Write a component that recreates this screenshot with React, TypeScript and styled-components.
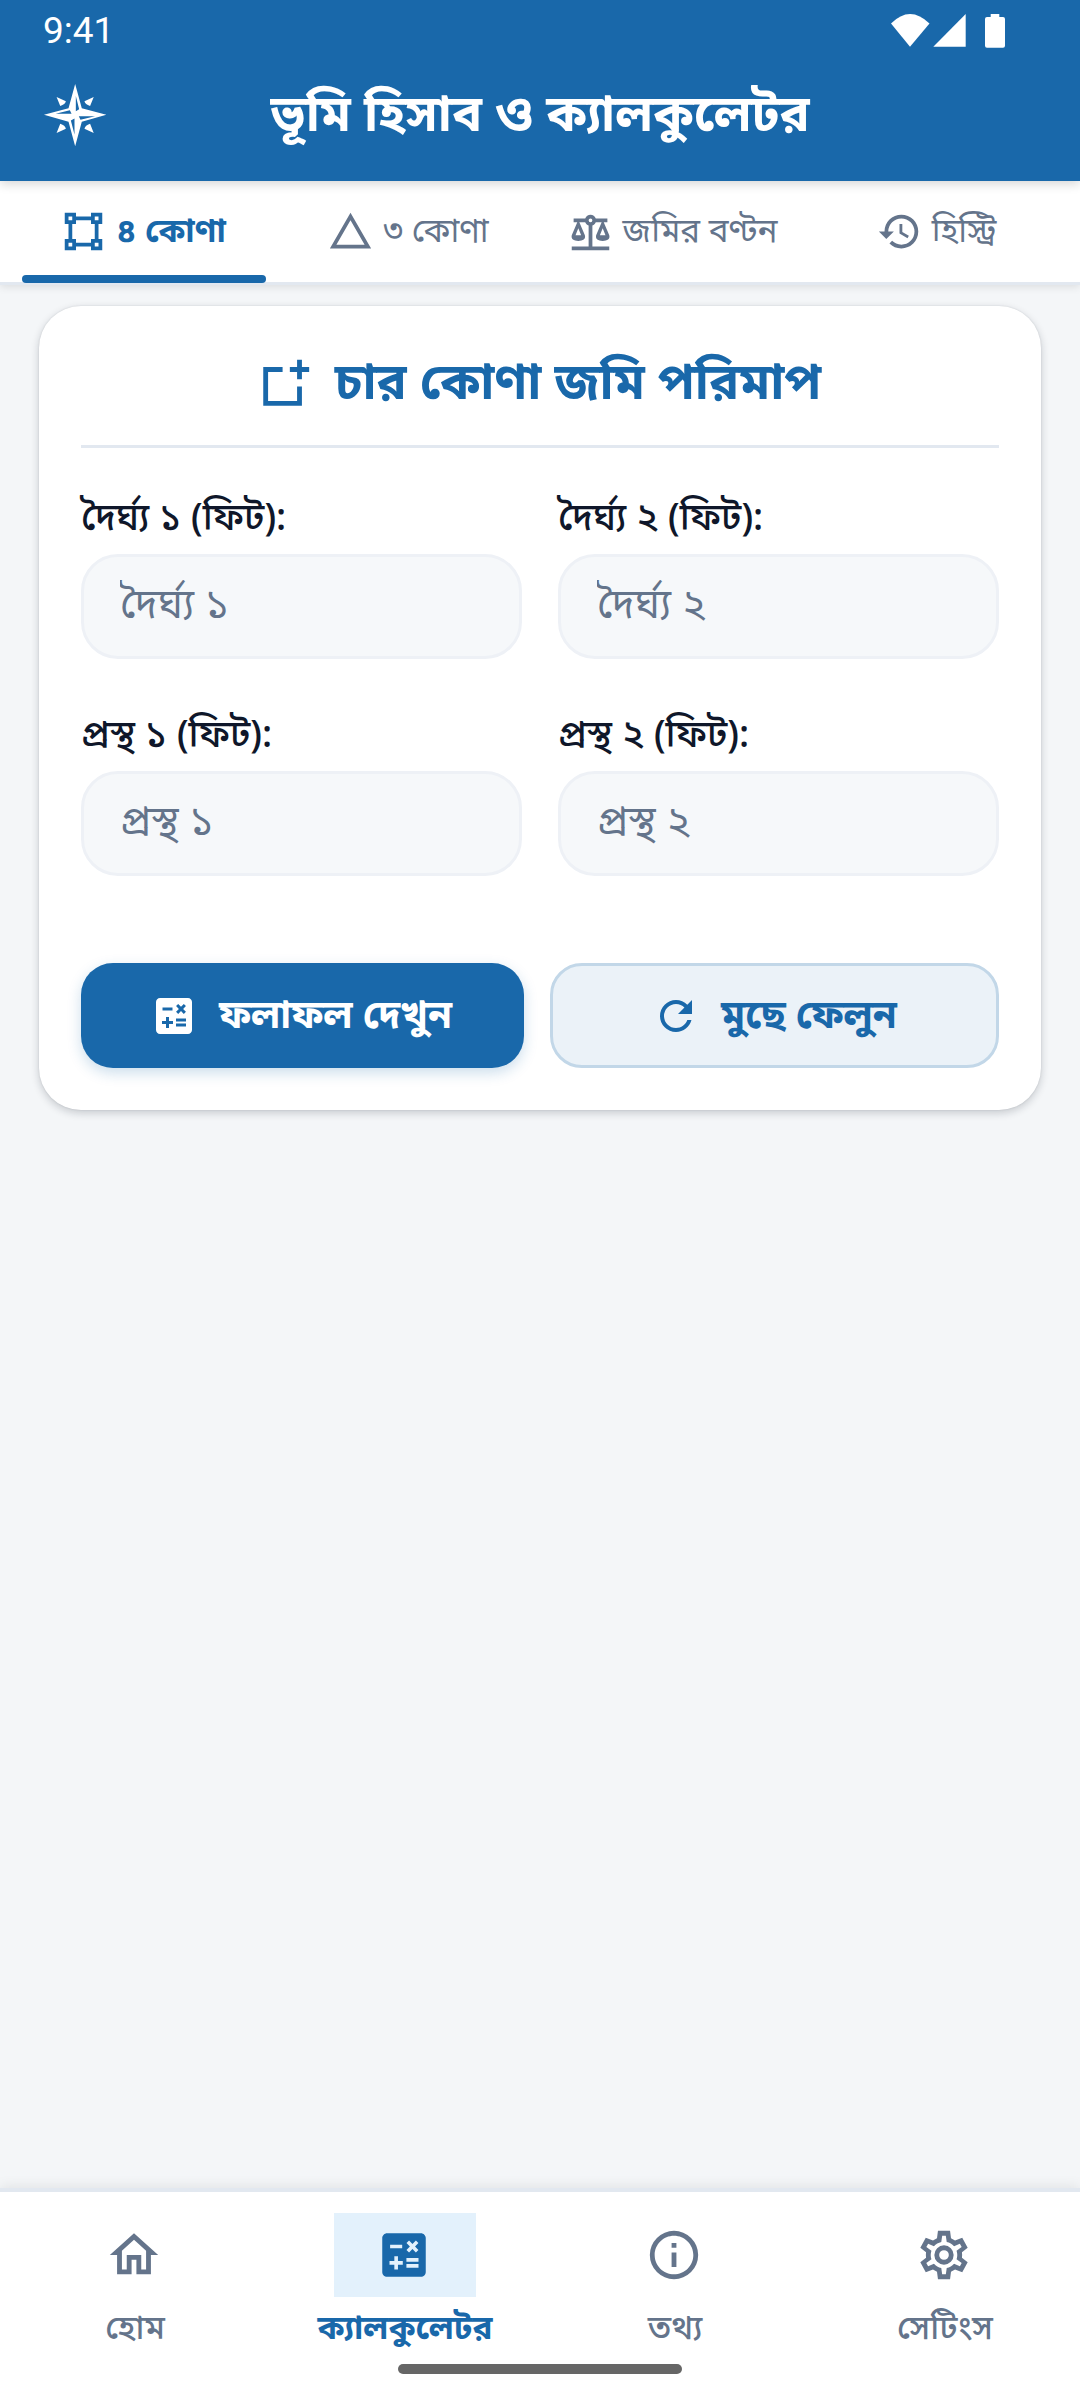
import React from 'react';
import styled, { createGlobalStyle, css } from 'styled-components';

const blue = '#1968aa';
const slate = '#64748b';

const Global = createGlobalStyle`
  * { box-sizing: border-box; }
  body { margin: 0; background: #f4f6f8; }
  button, input { font: inherit; }
`;

const Screen = styled.div`
  display: flex;
  flex-direction: column;
  width: 1080px;
  height: 2400px;
  overflow: hidden;
  background: #f4f6f8;
  font-family: 'Noto Sans Bengali', 'Noto Sans', sans-serif;
`;

const Header = styled.header`
  position: relative;
  z-index: 2;
  flex: none;
  height: 181px;
  background: ${blue};
  color: #fff;
  box-shadow: 0 3px 10px rgba(0, 0, 0, 0.16);
`;

const StatusBar = styled.div`
  display: flex;
  align-items: center;
  justify-content: space-between;
  height: 62px;
  padding: 0 74px 0 43px;
`;

const Clock = styled.span`
  font-family: Roboto, sans-serif;
  font-size: 37px;
  line-height: 62px;
`;

const StatusIcons = styled.svg`
  display: block;
  width: 116px;
  height: 36px;
  fill: #fff;
`;

const TitleBar = styled.div`
  display: grid;
  grid-template-columns: 64px 1fr 64px;
  align-items: center;
  height: 105px;
  padding: 0 43px;
`;

const Title = styled.h1`
  margin: 0;
  padding-top: 7px;
  text-align: center;
  font-size: 50px;
  font-weight: 700;
  line-height: 64px;
  white-space: nowrap;
`;

const Tabs = styled.nav`
  position: relative;
  z-index: 1;
  flex: none;
  display: grid;
  grid-template-columns: repeat(4, 244px);
  justify-content: center;
  column-gap: 20px;
  height: 104px;
  border-bottom: 3px solid #e2e8f0;
  background: #fff;
  box-shadow: 0 2px 8px rgba(0, 0, 0, 0.1);
`;

const Tab = styled.button<{ $active?: boolean }>`
  display: flex;
  align-items: center;
  justify-content: center;
  gap: 10px;
  padding: 8px 0 0 1px;
  border: 0;
  border-bottom: 8px solid transparent;
  background: none;
  color: ${slate};
  font-size: 33.2px;
  line-height: 48px;
  white-space: nowrap;
  ${(p) =>
    p.$active &&
    css`
      position: relative;
      padding: 8px 1px 0 0;
      color: ${blue};
      font-weight: 700;
      &::after {
        content: '';
        position: absolute;
        left: 0;
        right: 0;
        bottom: -9px;
        height: 8px;
        border-radius: 4px;
        background: ${blue};
      }
    `}
`;

const Caption = styled.span`
  padding-top: 5px;
`;

const Main = styled.main`
  flex: 1;
  padding: 21px 39px;
`;

const Card = styled.section`
  height: 804px;
  padding: 0 42px 42px;
  border-radius: 42px;
  background: #fff;
  box-shadow: 0 3px 8px rgba(15, 23, 42, 0.2), 0 0 2px rgba(15, 23, 42, 0.12);
  display: flex;
  flex-direction: column;
`;

const CardTitle = styled.h2`
  display: flex;
  align-items: center;
  justify-content: center;
  gap: 21px;
  height: 142px;
  margin: 0 0 43px;
  padding: 16px 3px 0 0;
  border-bottom: 3px solid #e2e8f0;
  color: ${blue};
  font-size: 50px;
  font-weight: 700;
  line-height: 64px;
  white-space: nowrap;
`;

const Fields = styled.div`
  display: grid;
  grid-template-columns: 1fr 1fr;
  gap: 49px 36px;
`;

const Field = styled.label`
  display: flex;
  flex-direction: column;
  gap: 7px;
  padding-top: 3px;
  color: #0f172a;
  font-size: 37.4px;
  font-weight: 550;
  line-height: 53px;
`;

const Input = styled.input`
  width: 100%;
  height: 105px;
  padding: 2px 36px 0;
  border: 3px solid #eef1f6;
  border-radius: 37px;
  outline: 0;
  background: #f6f8fa;
  font-size: 41px;
  font-weight: 450;
  &::placeholder {
    color: ${slate};
    opacity: 1;
  }
`;

const Actions = styled.div`
  display: grid;
  grid-template-columns: 443px 449px;
  column-gap: 26px;
  margin-top: auto;
`;

const Action = styled.button<{ $primary?: boolean }>`
  display: flex;
  align-items: center;
  justify-content: center;
  gap: 21px;
  height: 105px;
  padding: 0 ${(p) => (p.$primary ? 3 : 0)}px 0 0;
  border: ${(p) => (p.$primary ? '0' : '3px solid #c2d7e8')};
  border-radius: 32px;
  background: ${(p) => (p.$primary ? blue : '#ebf2f8')};
  color: ${(p) => (p.$primary ? '#fff' : blue)};
  box-shadow: ${(p) => (p.$primary ? '0 5px 14px rgba(25, 104, 170, 0.22)' : 'none')};
  font-size: 38.8px;
  font-weight: 700;
  line-height: 52px;
  white-space: nowrap;
`;

const BottomNav = styled.nav`
  position: relative;
  flex: none;
  display: grid;
  grid-template-columns: repeat(4, 1fr);
  height: 212px;
  border-top: 4px solid #e2e8f0;
  background: #fff;
  box-shadow: 0 -2px 12px rgba(0, 0, 0, 0.08);
`;

const NavItem = styled.a<{ $active?: boolean }>`
  display: flex;
  flex-direction: column;
  align-items: center;
  padding-top: 21px;
  color: ${(p) => (p.$active ? blue : slate)};
  font-size: 33.2px;
  font-weight: ${(p) => (p.$active ? 700 : 500)};
  line-height: 48px;
  white-space: nowrap;
`;

const NavIcon = styled.span<{ $active?: boolean }>`
  display: flex;
  align-items: center;
  justify-content: center;
  width: 142px;
  height: 84px;
  margin-bottom: 5px;
  padding-right: 2px;
  background: ${(p) => (p.$active ? '#e3f1fc' : 'transparent')};
`;

const HomeBar = styled.span`
  position: absolute;
  left: 398px;
  bottom: 26px;
  width: 284px;
  height: 10px;
  border-radius: 5px;
  background: #666;
`;

const Glyph = styled.svg<{ $size: number }>`
  display: block;
  flex: none;
  width: ${(p) => p.$size}px;
  height: ${(p) => p.$size}px;
  fill: currentColor;
  fill-rule: evenodd;
`;

const paths = {
  square:
    'M2,2H8V4H16V2H22V8H20V16H22V22H16V20H8V22H2V16H4V8H2V2M16,8V6H8V8H6V16H8V18H16V16H18V8H16M4,4V6H6V4H4M18,4V6H20V4H18M4,18V20H6V18H4M18,18V20H20V18H18Z',
  triangle: 'M12,2L1,21H23M12,6L19.53,19H4.47',
  scale:
    'M12,3C10.73,3 9.6,3.8 9.18,5H3V7H4.95L2,14C1.53,16 3,17 5.5,17C8,17 9.56,16 9,14L6.05,7H9.17C9.5,7.85 10.15,8.5 11,8.83V20H2V22H22V20H13V8.82C13.85,8.5 14.5,7.85 14.82,7H17.95L15,14C14.53,16 16,17 18.5,17C21,17 22.56,16 22,14L19.05,7H21V5H14.83C14.4,3.8 13.27,3 12,3M12,5A1,1 0 0,1 13,6A1,1 0 0,1 12,7A1,1 0 0,1 11,6A1,1 0 0,1 12,5M5.5,10.25L7,14H4L5.5,10.25M18.5,10.25L20,14H17L18.5,10.25Z',
  history:
    'M13.5,8H12V13L16.28,15.54L17,14.33L13.5,12.25V8M13,3A9,9 0 0,0 4,12H1L4.96,16.03L9,12H6A7,7 0 0,1 13,5A7,7 0 0,1 20,12A7,7 0 0,1 13,19C11.07,19 9.32,18.21 8.06,16.94L6.64,18.36C8.27,20 10.5,21 13,21A9,9 0 0,0 22,12A9,9 0 0,0 13,3',
  squarePlus: 'M17,2H19V5H22V7H19V10H17V7H14V5H17V2M3,5H11V7H5V19H17V13H19V21H3V5Z',
  calculator:
    'M19 3H5c-1.1 0-2 .9-2 2v14c0 1.1.9 2 2 2h14c1.1 0 2-.9 2-2V5c0-1.1-.9-2-2-2zm-5.97 4.06L14.09 6l1.41 1.41L16.91 6l1.06 1.06-1.41 1.41 1.41 1.41-1.06 1.06-1.41-1.4-1.41 1.41-1.06-1.06 1.41-1.41-1.41-1.42zM6.25 7.72h5v1.5h-5v-1.5zM11.5 16h-2v2H8v-2H6v-1.5h2v-2h1.5v2h2V16zm6.5 1.25h-5v-1.5h5v1.5zm0-2.5h-5v-1.5h5v1.5z',
  refresh:
    'M17.65,6.35C16.2,4.9 14.21,4 12,4A8,8 0 0,0 4,12A8,8 0 0,0 12,20C15.73,20 18.84,17.45 19.73,14H17.65C16.83,16.33 14.61,18 12,18A6,6 0 0,1 6,12A6,6 0 0,1 12,6C13.66,6 15.14,6.69 16.22,7.78L13,11H20V4L17.65,6.35Z',
  home: 'M12 5.69L17 10.19V18H15V12H9V18H7V10.19L12 5.69M12 3L2 12H5V20H11V14H13V20H19V12H22',
  info: 'M11,9H13V7H11M12,20C7.59,20 4,16.41 4,12C4,7.59 7.59,4 12,4C16.41,4 20,7.59 20,12C20,16.41 16.41,20 12,20M12,2A10,10 0 0,0 2,12A10,10 0 0,0 12,22A10,10 0 0,0 22,12A10,10 0 0,0 12,2M11,17H13V11H11V17Z',
  cog: 'M12,8A4,4 0 0,1 16,12A4,4 0 0,1 12,16A4,4 0 0,1 8,12A4,4 0 0,1 12,8M12,10A2,2 0 0,0 10,12A2,2 0 0,0 12,14A2,2 0 0,0 14,12A2,2 0 0,0 12,10M9.5,2H14.5L14.9,5.1L16.56,6.05L19.55,4.9L21.8,8.95L19.43,10.9L19.5,12L19.43,13.1L21.8,15.05L19.55,19.1L16.56,17.95L14.9,18.9L14.5,22H9.5L9.1,18.9L7.44,17.95L4.45,19.1L2.2,15.05L4.57,13.1L4.5,12L4.57,10.9L2.2,8.95L4.45,4.9L7.44,6.05L9.1,5.1ZM11.25,4L10.88,6.61C9.68,6.86 8.62,7.5 7.85,8.39L5.44,7.35L4.69,8.65L6.8,10.2C6.4,11.37 6.4,12.64 6.8,13.8L4.68,15.36L5.43,16.66L7.86,15.62C8.63,16.5 9.68,17.14 10.87,17.38L11.24,20H12.76L13.13,17.39C14.32,17.14 15.37,16.5 16.14,15.62L18.57,16.66L19.32,15.36L17.2,13.81C17.6,12.64 17.6,11.37 17.2,10.2L19.31,8.65L18.56,7.35L16.15,8.39C15.38,7.5 14.32,6.86 13.12,6.62L12.75,4H11.25Z',
};

const Icon = ({ name, size }: { name: keyof typeof paths; size: number }) => (
  <Glyph $size={size} viewBox="0 0 24 24">
    <path d={paths[name]} />
  </Glyph>
);

const Compass = () => (
  <Glyph $size={64} viewBox="22 19 193 193">
    <path d="M119 22L139 95L213 115L139 136L119 210L99 136L25 115L99 95ZM121 58V104L131 98ZM60 112H108L103 101ZM179 119H130L135 130ZM117 174V126L106 132Z" />
    <path d="M63 61L91 74Q89 83 74 88ZM175 61L147 74Q149 83 164 88ZM63 170L91 157Q89 147 74 142ZM175 170L147 157Q149 147 164 142Z" />
  </Glyph>
);

const tabs: { icon: keyof typeof paths; text: string }[] = [
  { icon: 'square', text: '৪ কোণা' },
  { icon: 'triangle', text: '৩ কোণা' },
  { icon: 'scale', text: 'জমির বণ্টন' },
  { icon: 'history', text: 'হিস্ট্রি' },
];

const fields = ['দৈর্ঘ্য ১', 'দৈর্ঘ্য ২', 'প্রস্থ ১', 'প্রস্থ ২'];

const nav: { icon: keyof typeof paths; text: string }[] = [
  { icon: 'home', text: 'হোম' },
  { icon: 'calculator', text: 'ক্যালকুলেটর' },
  { icon: 'info', text: 'তথ্য' },
  { icon: 'cog', text: 'সেটিংস' },
];

export default function App() {
  return (
    <Screen>
      <Global />
      <Header>
        <StatusBar>
          <Clock>9:41</Clock>
          <StatusIcons viewBox="0 0 116 36">
            <path d="M1 10.500Q20 -8.500 39.500 10.500L20 33.800Z" />
            <path d="M75.700 1V33.700H43.300Z" />
            <path d="M100.700 1H109.300V4H113Q115 4 115 6V32.700Q115 34.700 113 34.700H97Q95 34.700 95 32.700V6Q95 4 97 4H100.700Z" />
          </StatusIcons>
        </StatusBar>
        <TitleBar>
          <Compass />
          <Title>ভূমি হিসাব ও ক্যালকুলেটর</Title>
        </TitleBar>
      </Header>
      <Tabs>
        {tabs.map((t, i) => (
          <Tab key={t.icon} $active={i === 0}>
            <Icon name={t.icon} size={45} />
            <Caption>{t.text}</Caption>
          </Tab>
        ))}
      </Tabs>
      <Main>
        <Card>
          <CardTitle>
            <Icon name="squarePlus" size={58} />
            <Caption>চার কোণা জমি পরিমাপ</Caption>
          </CardTitle>
          <Fields>
            {fields.map((f) => (
              <Field key={f}>
                {f} (ফিট):
                <Input placeholder={f} />
              </Field>
            ))}
          </Fields>
          <Actions>
            <Action $primary>
              <Icon name="calculator" size={48} />
              <Caption>ফলাফল দেখুন</Caption>
            </Action>
            <Action>
              <Icon name="refresh" size={48} />
              <Caption>মুছে ফেলুন</Caption>
            </Action>
          </Actions>
        </Card>
      </Main>
      <BottomNav>
        {nav.map((n, i) => (
          <NavItem key={n.icon} $active={i === 1}>
            <NavIcon $active={i === 1}>
              <Icon name={n.icon} size={58} />
            </NavIcon>
            <Caption>{n.text}</Caption>
          </NavItem>
        ))}
        <HomeBar />
      </BottomNav>
    </Screen>
  );
}
